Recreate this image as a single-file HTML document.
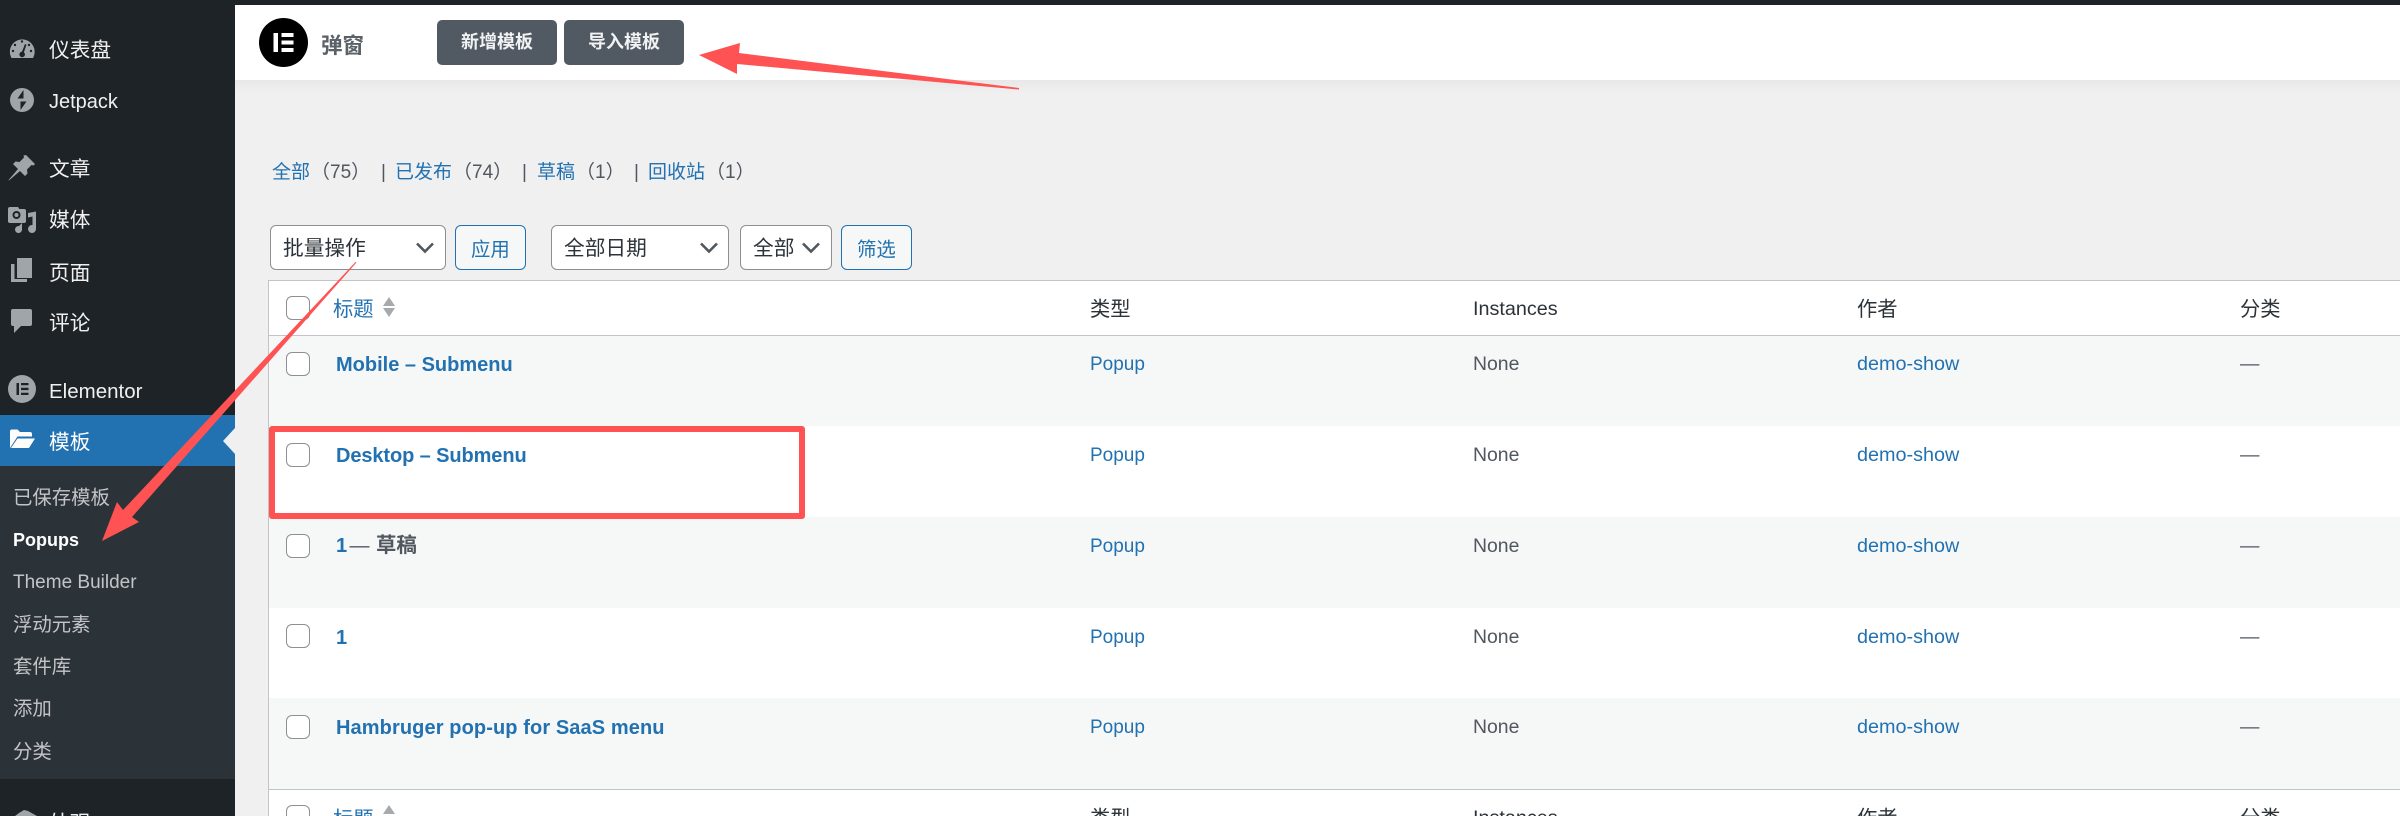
<!DOCTYPE html>
<html lang="zh-CN">
<head>
<meta charset="utf-8">
<title>弹窗</title>
<style>
*{box-sizing:border-box}
html,body{margin:0;padding:0;width:2400px;height:816px;overflow:hidden;background:#f0f0f0}
body{position:relative;font-family:"Liberation Sans","Noto Sans CJK SC",sans-serif;color:#2c3338}
.a{position:absolute}
.t{position:absolute;white-space:nowrap;line-height:30px;height:30px;margin-top:1.5px}
.side{color:#f0f0f1;font-size:20.5px}
.sub{color:#c3c4c7;font-size:19.4px}
.lnk{color:#2271b1;font-size:19.4px}
.cnt{color:#50575e;font-size:19px}
.b{font-weight:bold;font-size:20px;color:#2271b1}
.g{color:#50575e;font-size:19.4px;margin-top:.5px}
.d{margin-top:.5px}
.h{color:#2c3338;font-size:20px}
.cb{position:absolute;width:24px;height:24px;left:286px;border:1.5px solid #8c8f94;border-radius:6px;background:#fff}
.sel{position:absolute;top:225px;height:45px;border:1.5px solid #8c8f94;border-radius:6px;background:#fff}
.btn{position:absolute;top:225px;height:45px;border:1.5px solid #2271b1;border-radius:6px;background:#f6f7f7}
.hb{position:absolute;top:20px;height:45px;width:120px;background:#515962;border-radius:5px;color:#f1f2f3;font-weight:bold;font-size:18px;line-height:44px;text-align:center}
.row{position:absolute;left:269px;right:0}
</style>
</head>
<body>
<!-- sidebar -->
<div class="a" style="left:0;top:0;width:235px;height:816px;background:#1d2327"></div>
<div class="a" style="left:0;top:415px;width:235px;height:51px;background:#2271b1"></div>
<div class="a" style="left:0;top:466px;width:235px;height:313px;background:#2c3338"></div>
<svg class="a" style="left:0;top:0" width="235" height="816" viewBox="0 0 235 816">
  <!-- dashboard -->
  <path fill="#a0a5aa" d="M11.5 58A12.4 12.4 0 1 1 33 58Z"/>
  <g fill="#1d2327"><circle cx="22" cy="41.500" r="1.200"/><circle cx="15" cy="45" r="1.200"/><circle cx="29" cy="45" r="1.200"/><circle cx="13" cy="51" r="1.200"/><circle cx="31" cy="51" r="1.200"/><path d="M25 44l1.500.6-2.600 7.600a2.800 2.800 0 1 1-1.900-.6z"/></g>
  <!-- jetpack -->
  <circle cx="22" cy="100" r="12" fill="#a0a5aa"/>
  <path fill="#1d2327" d="M23.500 90v8.500h-6zM20.500 110v-8.500h6z" />
  <!-- pin -->
  <path fill="#a0a5aa" d="M26 155l9 9-1.500 1.500-2-.5-4.500 4.500.5 4-2.500 2.500-5-5-10.500 9-1 .5.500-1 9-10.500-5-5 2.500-2.500 4 .5 4.500-4.500-.5-2z"/>
  <!-- media -->
  <path fill="#a0a5aa" d="M12 207h6l2 3h4a2 2 0 0 1 2 2v10h-18v-13a2 2 0 0 1 2-2h2z M24 222h-15v-10h15z"/>
  <rect x="8" y="209" width="18" height="14" rx="2" fill="#a0a5aa"/>
  <circle cx="16.500" cy="215" r="4" fill="#1d2327"/><circle cx="16.500" cy="215" r="2" fill="#a0a5aa"/>
  <path fill="#a0a5aa" d="M28 213l8-1.500V229a4 4 0 1 1-3.500-4v-8.500l-4.500 1zM22 223v6.500a3.500 3.500 0 1 1-3-3.400z"/>
  <!-- pages -->
  <path fill="#a0a5aa" d="M17 258h15v20H17z"/><path fill="#a0a5aa" d="M11 264h3.500v15H27v3H11z"/>
  <!-- comments -->
  <path fill="#a0a5aa" d="M13 309h17a2 2 0 0 1 2 2v13a2 2 0 0 1-2 2h-9l-7 7v-7h-1a2 2 0 0 1-2-2v-13a2 2 0 0 1 2-2z"/>
  <!-- elementor -->
  <circle cx="22" cy="389" r="14" fill="#a0a5aa"/>
  <path fill="#1d2327" d="M16.500 383h2.500v12h-2.500zM21 383h7.500v2.300H21zM21 387.800h7.500v2.300H21zM21 392.700h7.500V395H21z"/>
  <!-- folder -->
  <path fill="#fff" d="M10 448v-16.500a2 2 0 0 1 2-2h5.500l2.500 2.500h10a2 2 0 0 1 2 2v2.500H17.500zM11 448l6.500-9.500H35l-6 9.500z"/>
  <path fill="#f0f0f0" d="M223 441l12-13v26z"/>
  <!-- appearance -->
  <path fill="#a0a5aa" d="M15 816l4-3 5-3 4 1 9 5z"/>
</svg>
<div class="t side" style="left:49px;top:34px;font-size:20.700px">仪表盘</div>
<div class="t side" style="left:49px;top:85px;font-size:20px">Jetpack</div>
<div class="t side" style="left:49px;top:153px;font-size:20.700px">文章</div>
<div class="t side" style="left:49px;top:204px;font-size:20.700px">媒体</div>
<div class="t side" style="left:49px;top:257px;font-size:20.700px">页面</div>
<div class="t side" style="left:49px;top:307px;font-size:20.700px">评论</div>
<div class="t side" style="left:49px;top:375px">Elementor</div>
<div class="t side" style="left:49px;top:426px;color:#fff;font-size:20.700px">模板</div>
<div class="t sub" style="left:13px;top:481px">已保存模板</div>
<div class="t sub" style="left:13px;top:523px;color:#fff;font-weight:bold;font-size:18px">Popups</div>
<div class="t sub" style="left:13px;top:566px;font-size:19px">Theme Builder</div>
<div class="t sub" style="left:13px;top:608px">浮动元素</div>
<div class="t sub" style="left:13px;top:650px">套件库</div>
<div class="t sub" style="left:13px;top:692px">添加</div>
<div class="t sub" style="left:13px;top:735px">分类</div>
<div class="t side" style="left:49px;top:807px;font-size:20.700px">外观</div>

<!-- top -->
<div class="a" style="left:235px;top:80px;right:0;height:14px;background:linear-gradient(#e8e8e8,#f0f0f0)"></div>
<div class="a" style="left:235px;top:5px;right:0;height:75px;background:#fff"></div>
<div class="a" style="left:0;top:0;right:0;height:5px;background:#1d2327"></div>
<svg class="a" style="left:259px;top:18px" width="49" height="49" viewBox="0 0 49 49">
  <circle cx="24.500" cy="24.500" r="24.500" fill="#000"/>
  <path fill="#fff" d="M14.500 15h4.500v19h-4.500zM22.500 15h12v4h-12zM22.500 22.500h12v4h-12zM22.500 30h12v4h-12z"/>
</svg>
<div class="t" style="left:321px;top:29px;font-size:21.500px;color:#5a6169;font-weight:bold">弹窗</div>
<div class="hb" style="left:437px">新增模板</div>
<div class="hb" style="left:564px">导入模板</div>

<!-- views -->
<div class="t lnk" style="left:272px;top:156px;font-size:19px">全部</div>
<div class="t cnt" style="left:311px;top:156px">（75）</div>
<div class="t cnt" style="left:381px;top:156px">|</div>
<div class="t lnk" style="left:395px;top:156px;font-size:19px">已发布</div>
<div class="t cnt" style="left:453px;top:156px">（74）</div>
<div class="t cnt" style="left:522px;top:156px">|</div>
<div class="t lnk" style="left:537px;top:156px;font-size:19px">草稿</div>
<div class="t cnt" style="left:576px;top:156px">（1）</div>
<div class="t cnt" style="left:634px;top:156px">|</div>
<div class="t lnk" style="left:648px;top:156px;font-size:19px">回收站</div>
<div class="t cnt" style="left:706px;top:156px">（1）</div>

<!-- toolbar -->
<div class="sel" style="left:270px;width:176px"></div>
<div class="t" style="left:283px;top:232px;font-size:20.700px">批量操作</div>
<div class="btn" style="left:455px;width:71px"></div>
<div class="t lnk" style="left:471px;top:233px">应用</div>
<div class="sel" style="left:551px;width:178px"></div>
<div class="t" style="left:564px;top:232px;font-size:20.700px">全部日期</div>
<div class="sel" style="left:740px;width:92px"></div>
<div class="t" style="left:753px;top:232px;font-size:20.700px">全部</div>
<div class="btn" style="left:841px;width:71px"></div>
<div class="t lnk" style="left:857px;top:233px">筛选</div>
<svg class="a" style="left:0;top:0" width="2400" height="300" fill="none" stroke="#50575e" stroke-width="2.600">
  <path d="M417 243.500l8 8 8-8M701 243.500l8 8 8-8M803 243.500l8 8 8-8"/>
</svg>

<!-- table -->
<div class="a" style="left:268px;top:280px;right:0;height:536px;background:#fff;border-left:1.500px solid #c3c4c7;border-top:1.500px solid #c3c4c7"></div>
<div class="a" style="left:268px;top:334.500px;right:0;height:1.500px;background:#c3c4c7"></div>
<div class="row" style="top:336px;height:90px;background:#f6f7f7"></div>
<div class="row" style="top:517px;height:91px;background:#f6f7f7"></div>
<div class="row" style="top:698px;height:91px;background:#f6f7f7"></div>
<div class="a" style="left:268px;top:788.500px;right:0;height:1.500px;background:#c3c4c7"></div>

<div class="cb" style="top:296px"></div>
<div class="t lnk" style="left:333px;top:293px;font-size:20.300px">标题</div>
<svg class="a" style="left:383px;top:296px" width="12" height="22" fill="#a7aaad"><path d="M6 1l6 9H0zM6 21l6-9H0z"/></svg>
<div class="t h" style="left:1090px;top:293px;font-size:20.300px">类型</div>
<div class="t h" style="left:1473px;top:292px;font-size:19.800px">Instances</div>
<div class="t h" style="left:1857px;top:293px;font-size:20.300px">作者</div>
<div class="t h" style="left:2240px;top:293px;font-size:20.300px">分类</div>

<!-- row 1 -->
<div class="cb" style="top:352px"></div>
<div class="t b" style="left:336px;top:348px">Mobile – Submenu</div>
<div class="t lnk" style="left:1090px;top:348px;font-size:19px">Popup</div>
<div class="t g" style="left:1473px;top:348px">None</div>
<div class="t lnk d" style="left:1857px;top:348px;font-size:19.800px">demo-show</div>
<div class="t g" style="left:2240px;top:348px">—</div>
<!-- row 2 -->
<div class="cb" style="top:443px"></div>
<div class="t b" style="left:336px;top:439px;letter-spacing:-.1px">Desktop – Submenu</div>
<div class="t lnk" style="left:1090px;top:439px;font-size:19px">Popup</div>
<div class="t g" style="left:1473px;top:439px">None</div>
<div class="t lnk d" style="left:1857px;top:439px;font-size:19.800px">demo-show</div>
<div class="t g" style="left:2240px;top:439px">—</div>
<!-- row 3 -->
<div class="cb" style="top:534px"></div>
<div class="t b" style="left:336px;top:529px">1</div>
<div class="t" style="left:349.500px;top:529px;font-size:20px;color:#50575e">—</div>
<div class="t" style="left:376px;top:529px;font-size:20.400px;font-weight:bold;color:#50575e">草稿</div>
<div class="t lnk" style="left:1090px;top:530px;font-size:19px">Popup</div>
<div class="t g" style="left:1473px;top:530px">None</div>
<div class="t lnk d" style="left:1857px;top:530px;font-size:19.800px">demo-show</div>
<div class="t g" style="left:2240px;top:530px">—</div>
<!-- row 4 -->
<div class="cb" style="top:624px"></div>
<div class="t b" style="left:336px;top:621px">1</div>
<div class="t lnk" style="left:1090px;top:621px;font-size:19px">Popup</div>
<div class="t g" style="left:1473px;top:621px">None</div>
<div class="t lnk d" style="left:1857px;top:621px;font-size:19.800px">demo-show</div>
<div class="t g" style="left:2240px;top:621px">—</div>
<!-- row 5 -->
<div class="cb" style="top:715px"></div>
<div class="t b" style="left:336px;top:711px;letter-spacing:.1px">Hambruger pop-up for SaaS menu</div>
<div class="t lnk" style="left:1090px;top:711px;font-size:19px">Popup</div>
<div class="t g" style="left:1473px;top:711px">None</div>
<div class="t lnk d" style="left:1857px;top:711px;font-size:19.800px">demo-show</div>
<div class="t g" style="left:2240px;top:711px">—</div>
<!-- footer -->
<div class="cb" style="top:805px"></div>
<div class="t lnk" style="left:333px;top:803px;font-size:20.300px">标题</div>
<svg class="a" style="left:383px;top:804px" width="12" height="12" fill="#a7aaad"><path d="M6 1l6 9H0z"/></svg>
<div class="t h" style="left:1090px;top:802px;font-size:20.300px">类型</div>
<div class="t h" style="left:1473px;top:801px;font-size:19.800px">Instances</div>
<div class="t h" style="left:1857px;top:802px;font-size:20.300px">作者</div>
<div class="t h" style="left:2240px;top:802px;font-size:20.300px">分类</div>

<!-- annotations -->
<div class="a" style="left:269px;top:426px;width:536px;height:93px;border:6px solid #ff5252;border-radius:3px"></div>
<svg class="a" style="left:0;top:0" width="2400" height="816" fill="#ff5252">
  <path d="M699 55L740 43L739 53L1019 88L1019 89.500L737 64L737 74Z"/>
  <path d="M102 541L117 502L123 510L355.500 262L356.500 262.500L132 517L139 522Z"/>
</svg>
</body>
</html>
